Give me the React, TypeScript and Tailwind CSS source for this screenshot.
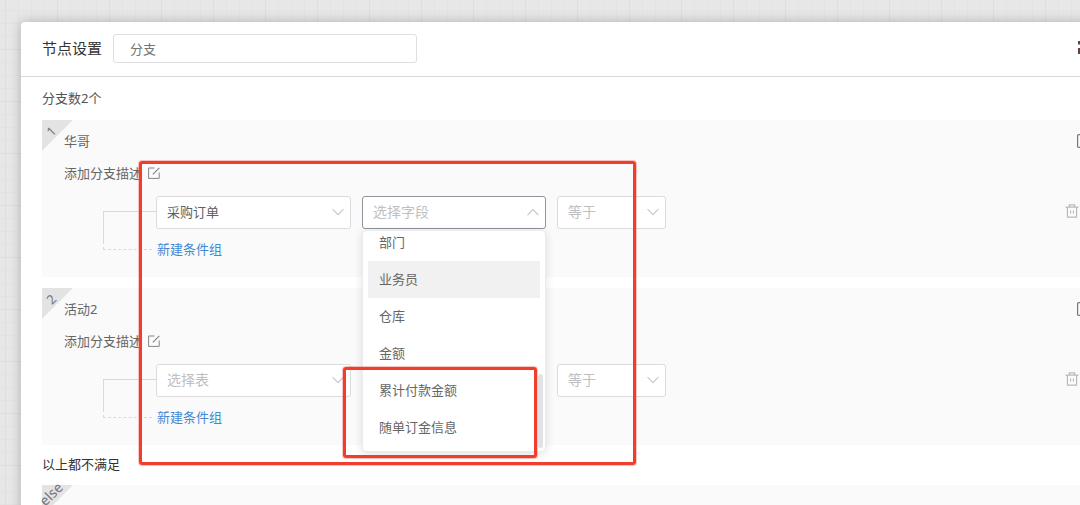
import React from "react";

const fieldOptions = ["部门", "业务员", "仓库", "金额", "累计付款金额", "随单订金信息"];

function Chevron({ up = false }: { up?: boolean }) {
  return (
    <svg
      className="pointer-events-none absolute top-0 right-[7px] h-full w-3 text-[#c3c6cc]"
      viewBox="0 0 12 12"
      fill="none"
      stroke="currentColor"
      strokeWidth="1.1"
      aria-hidden="true"
    >
      <path d={up ? "M0.5 8.6 6 3.1l5.5 5.5" : "M0.5 2.6 6 8.1l5.5-5.5"} />
    </svg>
  );
}

interface PickerProps {
  label: string;
  options: string[];
  width: string;
  placeholder?: boolean;
  open?: boolean;
  children?: React.ReactNode;
}

function Picker({ label, options, width, placeholder = false, open = false, children }: PickerProps) {
  return (
    <div className={`relative ${width}`}>
      <select
        aria-label={label}
        className={`block h-[33px] w-full appearance-none rounded-[3px] border bg-white pr-6 pb-[2px] pl-[10px] outline-none ${
          open ? "border-[#8e929b]" : "border-[#dcdcde]"
        } ${placeholder ? "text-sm text-[#bfbfc2]" : "text-[13px] text-[#606060]"}`}
      >
        {options.map((o) => (
          <option key={o}>{o}</option>
        ))}
      </select>
      <Chevron up={open} />
      {children}
    </div>
  );
}

function FieldMenu() {
  return (
    <div className="absolute top-[34px] left-0 z-10 flex h-[222px] w-full flex-col justify-end overflow-hidden rounded-[4px] border border-[#ececf0] bg-white px-[5px] pb-[5px] shadow-[0_2px_10px_rgba(0,0,0,0.12)]">
      <ul role="listbox" aria-label="字段列表">
        {fieldOptions.map((o, i) => (
          <li
            key={o}
            role="option"
            aria-selected={i === 1}
            className={`flex h-[37px] items-center px-[11px] pb-[2px] text-[13px] text-[#666] ${
              i === 1 ? "bg-[#f1f1f1]" : ""
            }`}
          >
            {o}
          </li>
        ))}
      </ul>
      <span className="absolute right-[2px] bottom-[3px] h-[74px] w-[5px] rounded-full bg-[#e2e3e6]" />
    </div>
  );
}

function Corner({ text, wide = false }: { text: string; wide?: boolean }) {
  return (
    <div className="absolute top-0 left-0 size-[31px]">
      <svg className="size-full" viewBox="0 0 31 31" aria-hidden="true">
        <path d="M0 0H31L0 31Z" fill="#e3e3e3" />
      </svg>
      <span
        className={`absolute left-0 flex size-[18px] -rotate-45 items-center justify-center leading-none text-[#777] ${
          wide ? "top-0 text-sm" : "top-[2px] text-[13px]"
        }`}
      >
        {text}
      </span>
    </div>
  );
}

function EditIcon() {
  return (
    <svg className="size-3" viewBox="0 0 12 12" fill="none" stroke="#858585" aria-hidden="true">
      <path d="M6.5 1H0.6V11.4H11.2V5.5" />
      <path d="M4.8 7.4 11.3 0.8" strokeWidth="1.2" />
    </svg>
  );
}

function TrashIcon() {
  return (
    <svg className="h-[14px] w-[14px]" viewBox="0 0 14 14" fill="none" stroke="#b9b9b9" aria-hidden="true">
      <path d="M0.5 3.2H13.5M4.4 3V0.9H9.6V3M2.4 3.4V13.2H11.6V3.4" strokeWidth="1.2" />
      <path d="M5.6 6.5V9.8M8.4 6.5V9.8" strokeWidth="1.1" />
    </svg>
  );
}

function CopyIcon() {
  return (
    <svg className="size-[14px]" viewBox="0 0 14 14" fill="none" stroke="#77757e" aria-hidden="true">
      <rect x="0.6" y="0.6" width="12.8" height="12.8" rx="1" strokeWidth="1.2" />
    </svg>
  );
}

interface BranchProps {
  no: string;
  name: string;
  table: string;
  tableEmpty?: boolean;
  open?: boolean;
}

function Branch({ no, name, table, tableEmpty = false, open = false }: BranchProps) {
  return (
    <section className="relative h-[157px] bg-[#fafafa] pt-[11px] pl-[22px]">
      <Corner text={no} />
      <div className="flex h-5 items-center justify-between pr-4 text-[#666]">
        <h3>{name}</h3>
        <button aria-label="复制">
          <CopyIcon />
        </button>
      </div>
      <div className="mt-3 flex h-5 items-center gap-[6px] text-[#666]">
        <span>添加分支描述</span>
        <button aria-label="编辑描述">
          <EditIcon />
        </button>
      </div>
      <div className="mt-[13px] flex pl-[39px]">
        <div className="mt-[15px] h-[39px] w-[53px] shrink-0">
          <div className="h-[30px] border-t border-l border-[#dadada]" />
          <div className="mr-1 h-[9px] border-b border-l border-dashed border-[#dadada]" />
        </div>
        <div className="min-w-0 flex-1">
          <div className="flex items-center gap-[11px]">
            <Picker label="数据表" options={[table]} width="w-[195px]" placeholder={tableEmpty} />
            <Picker
              label="字段"
              options={["选择字段", ...fieldOptions]}
              width="w-[184px]"
              placeholder
              open={open}
            >
              {open && <FieldMenu />}
            </Picker>
            <Picker label="比较方式" options={["等于"]} width="w-[109px]" placeholder />
            <button aria-label="删除条件" className="mr-7 mb-[3px] ml-auto">
              <TrashIcon />
            </button>
          </div>
          <button className="mt-[10px] ml-px block h-5 text-[#3f8ad2]">新建条件组</button>
        </div>
      </div>
    </section>
  );
}

export default function App() {
  return (
    <div className="relative h-screen overflow-hidden bg-[#e7e7e7] bg-[linear-gradient(90deg,#dedede_1px,transparent_1px),linear-gradient(#dedede_1px,transparent_1px),linear-gradient(90deg,#e3e3e3_1px,transparent_1px),linear-gradient(#e3e3e3_1px,transparent_1px)] bg-[size:52px_52px,52px_52px,13px_13px,13px_13px] bg-[position:5px_49px] pt-[22px] pl-[21px] font-['Noto_Sans','Noto_Sans_CJK_SC',sans-serif] text-[13px] leading-5">
      <main className="-mr-12 min-h-screen rounded-[4px] bg-white shadow-[0_0_12px_rgba(0,0,0,0.24)]">
        <header className="flex h-[55px] items-center border-b border-[#d8dad9] pr-[34px] pb-[2px] pl-[21px]">
          <label htmlFor="node-name" className="text-[15px] text-[#333]">
            节点设置
          </label>
          <input
            id="node-name"
            defaultValue="分支"
            className="ml-[11px] h-[29px] w-[304px] rounded-[3px] border border-[#dfdfdf] px-4 text-[#757575] outline-none"
          />
          <button aria-label="更多操作" className="ml-auto">
            <svg className="size-4" viewBox="0 0 16 16" fill="#5c4545" aria-hidden="true">
              <path d="M0 1h16v3.5H0zM0 8h6v6H0zM10 8h6v6h-6z" />
            </svg>
          </button>
        </header>
        <div className="px-[21px] pt-[11px]">
          <h2 className="text-[#555]">分支数2个</h2>
          <div className="mt-3 flex flex-col gap-[11px]">
            <Branch no="1" name="华哥" table="采购订单" open />
            <Branch no="2" name="活动2" table="选择表" tableEmpty />
          </div>
          <h2 className="mt-[9px] text-[#333]">以上都不满足</h2>
          <section className="relative mt-[11px] h-20 bg-[#fafafa]">
            <Corner text="else" wide />
          </section>
        </div>
      </main>
      <div className="pointer-events-none absolute top-[161px] left-[139px] z-20 h-[304px] w-[497px] rounded-[3px] border-[3px] border-[#f03d2d] ring-1 ring-[#f03d2d]/30" />
      <div className="pointer-events-none absolute top-[367px] left-[343px] z-20 h-[91px] w-[194px] rounded-[3px] border-[3px] border-[#f03d2d] ring-1 ring-[#f03d2d]/30" />
    </div>
  );
}
